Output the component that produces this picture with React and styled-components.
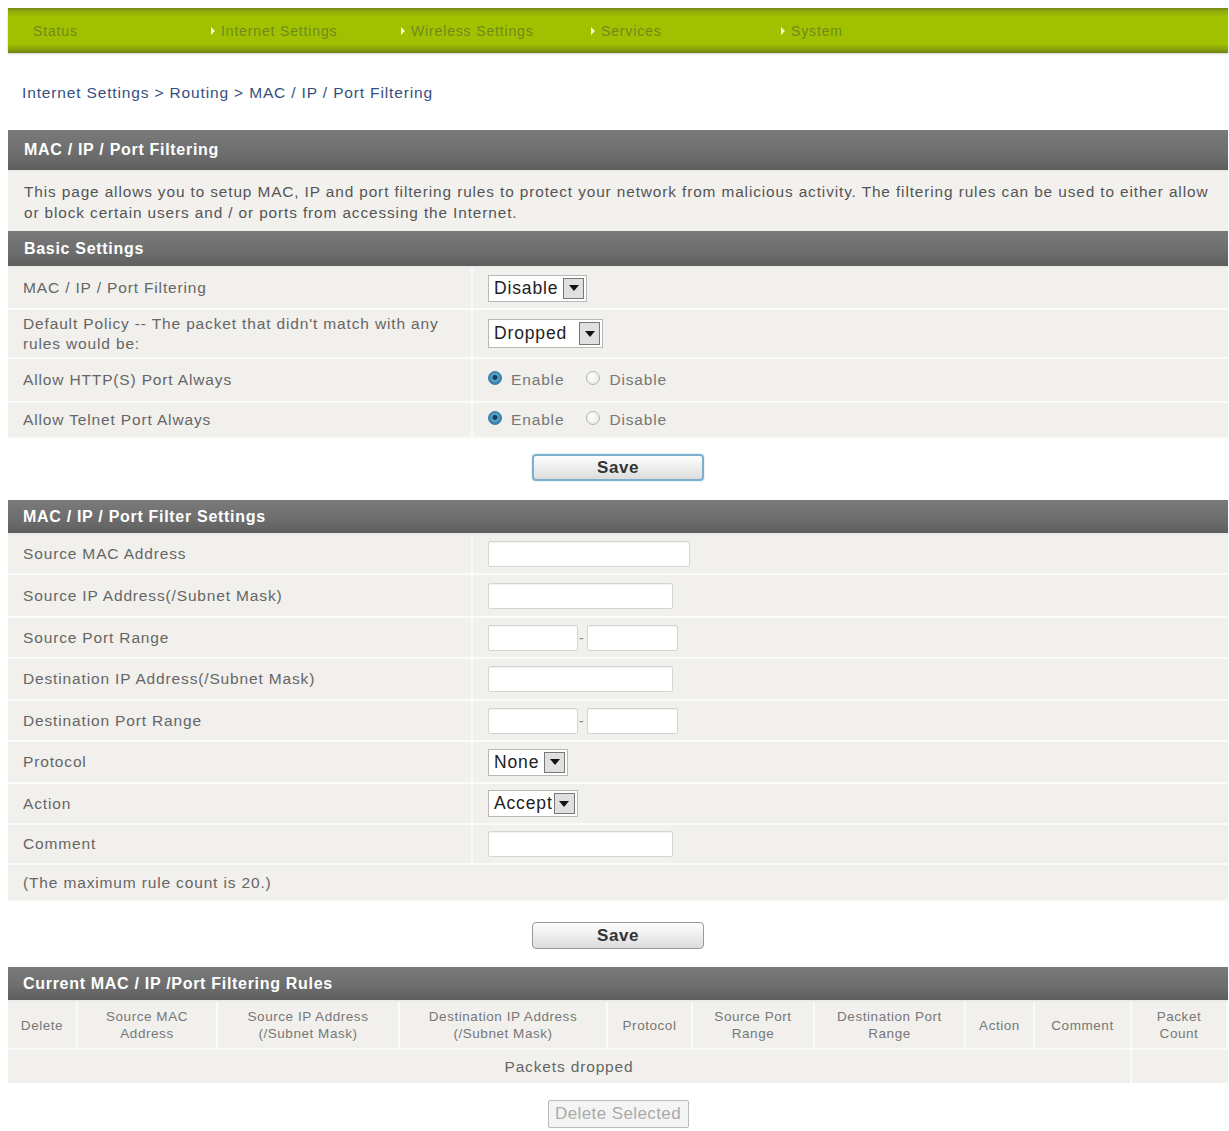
import React from 'react'
import styled, { createGlobalStyle } from 'styled-components'

const GlobalStyle = createGlobalStyle`
  body {
    margin: 0;
    background: #fff;
    font-family: "Liberation Sans", Arial, sans-serif;
    letter-spacing: 0.85px;
  }
`

const Page = styled.div`
  padding: 8px 1px 0 8px;
`

const NavBar = styled.div`
  height: 45px;
  display: flex;
  align-items: center;
  background: linear-gradient(180deg, #74861a 0px, #8faa0c 3px, #a2c200 9px, #a0c000 36px, #8aa30c 41px, #6f8214 45px);
  box-shadow: 0 1px 2px rgba(0, 0, 0, 0.2);
`

const NavItem = styled.div`
  width: 190px;
  flex: none;
  display: flex;
  align-items: center;
  gap: 6px;
  padding-left: ${p => (p.$first ? '25px' : '13px')};
  box-sizing: border-box;
  font-size: 14px;
  color: #6f8a1c;
`

const NavArrow = styled.span`
  width: 0;
  height: 0;
  border-top: 4px solid transparent;
  border-bottom: 4px solid transparent;
  border-left: 4px solid #f4f9c8;
`

const Crumb = styled.div`
  padding: 31px 0 0 14px;
  height: 46px;
  box-sizing: border-box;
  font-size: 15.5px;
  color: #35507e;
`

const Section = styled.div`
  margin-top: ${p => p.$gap || 0}px;
`

const Header = styled.div`
  height: ${p => p.$h || 36}px;
  box-sizing: border-box;
  display: flex;
  align-items: center;
  padding-left: ${p => p.$pad || 16}px;
  background: linear-gradient(180deg, #7a7a7a 0%, #6d6d6d 60%, #5e5e5e 100%);
  border-bottom: 2px solid #eaeaea;
  color: #fff;
  font-weight: bold;
  font-size: 16px;
  letter-spacing: 0.7px;
`

const Intro = styled.div`
  background: #f2f1ee;
  padding: 9px 16px 8px;
  font-size: 15.4px;
  line-height: 21px;
  color: #555;
  letter-spacing: 0.88px;
`

const Row = styled.div`
  display: grid;
  grid-template-columns: 465px 1fr;
  box-sizing: border-box;
  min-height: ${p => p.$h}px;
  background: #f1f0ed;
  border-bottom: 2px solid #fbfbfa;
`

const Label = styled.div`
  display: flex;
  align-items: center;
  padding: 2px 15px;
  font-size: 15.5px;
  line-height: 20px;
  color: #666;
  border-right: 2px solid #fafaf9;
`

const Control = styled.div`
  display: flex;
  align-items: center;
  padding-left: 15px;
  gap: 6px;
`

const Full = styled.div`
  grid-column: 1 / 3;
  display: flex;
  align-items: center;
  padding: 0 15px;
  font-size: 15.5px;
  color: #666;
`

const Select = styled.div`
  display: inline-flex;
  align-items: stretch;
  height: ${p => p.$h || 27}px;
  border: 1px solid #b8b8b8;
  background: #fff;
  font-size: 17.5px;
  color: #222;
  box-sizing: border-box;
`

const SelectText = styled.span`
  display: flex;
  align-items: center;
  padding: 0 ${p => p.$pad || 5}px 0 5px;
`

const SelectBtn = styled.span`
  width: 19px;
  margin: 2px 2px 2px 0;
  border: 1px solid #777;
  background: #e0e0e0;
  display: flex;
  align-items: center;
  justify-content: center;
  &::after {
    content: '';
    border-left: 5px solid transparent;
    border-right: 5px solid transparent;
    border-top: 6px solid #111;
  }
`

const Radio = styled.span`
  width: 14px;
  height: 14px;
  border-radius: 50%;
  box-sizing: border-box;
  border: 1px solid ${p => (p.$on ? '#3a7aa0' : '#b5b5b5')};
  background: ${p => (p.$on ? 'radial-gradient(circle at 50% 45%, #1c3d55 0 2px, #5aa6cf 3px, #2f77a4 7px)' : 'radial-gradient(circle at 40% 40%, #fff, #e5e5e5)')};
  margin-top: -4px;
`

const RadioText = styled.span`
  font-size: 15.5px;
  color: #777;
  margin-right: 16px;
  margin-left: 3px;
`

const Input = styled.div`
  width: ${p => p.$w}px;
  height: 26px;
  box-sizing: border-box;
  background: #fff;
  border: 1px solid #d4d4d4;
  border-radius: 2px;
  box-shadow: inset 0 1px 1px rgba(0, 0, 0, 0.06);
`

const Dash = styled.span`
  color: #888;
  font-size: 14px;
  margin: 0 -4px 0 -5px;
`

const ButtonBar = styled.div`
  display: flex;
  justify-content: center;
  padding: ${p => p.$pad};
`

const Button = styled.button`
  width: ${p => p.$w || 172}px;
  height: ${p => p.$h || 27}px;
  font-family: "Liberation Sans", Arial, sans-serif;
  font-size: 17px;
  font-weight: bold;
  letter-spacing: 0.6px;
  color: ${p => (p.$disabled ? '#aaa' : '#333')};
  background: ${p => (p.$disabled ? '#f4f4f4' : 'linear-gradient(180deg, #fdfdfd 0%, #eeeeee 50%, #dcdcdc 100%)')};
  border: ${p => (p.$focus ? '2px solid #7cb0cc' : '1px solid #9a9a9a')};
  border-radius: 4px;
  box-shadow: ${p => (p.$focus ? '0 0 2px #a9d0e4' : 'none')};
  padding: 0;
  ${p => p.$disabled && 'font-weight: normal; border-radius: 2px; border-color: #bbb; letter-spacing: 0.4px;'}
`

const Table = styled.div`
  display: grid;
  grid-template-columns: 70px 140px 182px 208px 85px 122px 151px 69px 97px 1fr;
`

const Th = styled.div`
  display: flex;
  align-items: center;
  justify-content: center;
  text-align: center;
  height: 48px;
  box-sizing: border-box;
  background: #f1f0ed;
  border-right: 2px solid #fafaf9;
  border-bottom: 2px solid #fafaf9;
  font-size: 13.5px;
  line-height: 17px;
  letter-spacing: 0.55px;
  color: #777;
  &:last-child {
    border-right: none;
  }
`

const Td = styled.div`
  grid-column: ${p => p.$span || 'auto'};
  display: flex;
  align-items: center;
  justify-content: center;
  height: 33px;
  background: #f1f0ed;
  font-size: 15.5px;
  color: #666;
  border-right: ${p => (p.$sep ? '2px solid #fafaf9' : 'none')};
`

const navItems = ['Status', 'Internet Settings', 'Wireless Settings', 'Services', 'System']
const cols = [
  'Delete',
  ['Source MAC', 'Address'],
  ['Source IP Address', '(/Subnet Mask)'],
  ['Destination IP Address', '(/Subnet Mask)'],
  'Protocol',
  ['Source Port', 'Range'],
  ['Destination Port', 'Range'],
  'Action',
  'Comment',
  ['Packet', 'Count']
]

function RadioPair() {
  return (
    <Control>
      <Radio $on />
      <RadioText>Enable</RadioText>
      <Radio />
      <RadioText>Disable</RadioText>
    </Control>
  )
}

function Dropdown({ value, pad, h }) {
  return (
    <Select $h={h}>
      <SelectText $pad={pad}>{value}</SelectText>
      <SelectBtn />
    </Select>
  )
}

export default function App() {
  return (
    <Page>
      <GlobalStyle />
      <NavBar>
        {navItems.map((n, i) => (
          <NavItem key={n} $first={i === 0}>
            {i > 0 && <NavArrow />}
            {n}
          </NavItem>
        ))}
      </NavBar>
      <Crumb>Internet Settings &gt; Routing &gt; MAC / IP / Port Filtering</Crumb>

      <Section $gap={31}>
        <Header $h={42}>MAC / IP / Port Filtering</Header>
        <Intro>
          This page allows you to setup MAC, IP and port filtering rules to protect your network from malicious activity. The filtering rules can be used to either allow or block certain users and / or ports from accessing the Internet.
        </Intro>
        <Header $h={37}>Basic Settings</Header>
        <Row $h={42}>
          <Label>MAC / IP / Port Filtering</Label>
          <Control><Dropdown value="Disable" /></Control>
        </Row>
        <Row $h={49}>
          <Label>Default Policy -- The packet that didn't match with any rules would be:</Label>
          <Control><Dropdown value="Dropped" pad={12} h={29} /></Control>
        </Row>
        <Row $h={44}>
          <Label>Allow HTTP(S) Port Always</Label>
          <RadioPair />
        </Row>
        <Row $h={36}>
          <Label>Allow Telnet Port Always</Label>
          <RadioPair />
        </Row>
        <ButtonBar $pad="15px 0 19px">
          <Button $focus>Save</Button>
        </ButtonBar>
      </Section>

      <Section>
        <Header $h={35} $pad={15}>MAC / IP / Port Filter Settings</Header>
        <Row $h={40}>
          <Label>Source MAC Address</Label>
          <Control><Input $w={202} /></Control>
        </Row>
        <Row $h={43}>
          <Label>Source IP Address(/Subnet Mask)</Label>
          <Control><Input $w={185} /></Control>
        </Row>
        <Row $h={41}>
          <Label>Source Port Range</Label>
          <Control><Input $w={90} /><Dash>-</Dash><Input $w={91} /></Control>
        </Row>
        <Row $h={42}>
          <Label>Destination IP Address(/Subnet Mask)</Label>
          <Control><Input $w={185} /></Control>
        </Row>
        <Row $h={41}>
          <Label>Destination Port Range</Label>
          <Control><Input $w={90} /><Dash>-</Dash><Input $w={91} /></Control>
        </Row>
        <Row $h={42}>
          <Label>Protocol</Label>
          <Control><Dropdown value="None" /></Control>
        </Row>
        <Row $h={41}>
          <Label>Action</Label>
          <Control><Dropdown value="Accept" pad={1} /></Control>
        </Row>
        <Row $h={40}>
          <Label>Comment</Label>
          <Control><Input $w={185} /></Control>
        </Row>
        <Row $h={37}>
          <Full>(The maximum rule count is 20.)</Full>
        </Row>
        <ButtonBar $pad="20px 0 18px">
          <Button>Save</Button>
        </ButtonBar>
      </Section>

      <Section>
        <Header $h={35} $pad={15}>Current MAC / IP /Port Filtering Rules</Header>
        <Table>
          {cols.map((c, i) => (
            <Th key={i}>
              {Array.isArray(c) ? (
                <span>{c[0]}<br />{c[1]}</span>
              ) : c}
            </Th>
          ))}
          <Td $span="1 / 10" $sep>Packets dropped</Td>
          <Td />
        </Table>
        <ButtonBar $pad="17px 0 0">
          <Button $disabled $w={141} $h={28}>Delete Selected</Button>
        </ButtonBar>
      </Section>
    </Page>
  )
}
